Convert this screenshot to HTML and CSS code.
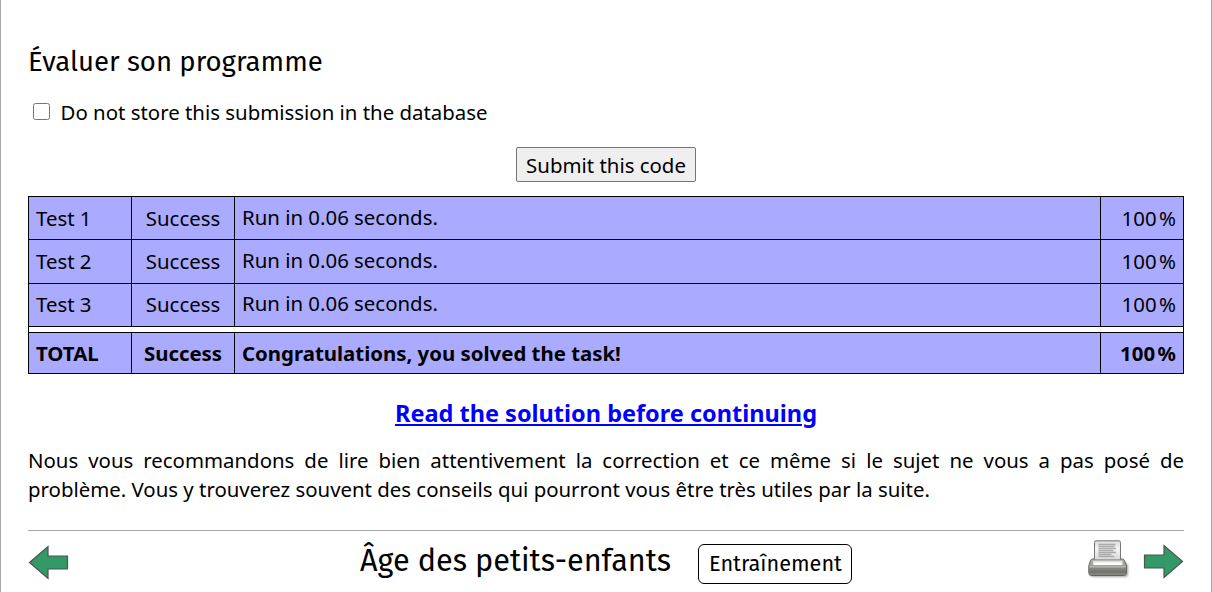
FILE: index.html
```html
<!DOCTYPE html>
<html lang="fr">
<head>
<meta charset="utf-8">
<title>Âge des petits-enfants</title>
<link rel="stylesheet" href="styles.css">
</head>
<body>
<main class="page">
  <h2 class="section-title">Évaluer son programme</h2>
  <form class="submission">
    <label class="store"><input type="checkbox" class="store-box"><span>Do not store this submission in the database</span></label>
    <button type="button" class="submit">Submit this code</button>
  </form>
  <table class="results">
    <colgroup><col class="col-name"><col class="col-status"><col><col class="col-score"></colgroup>
    <tbody>
      <tr class="row"><td>Test 1</td><td class="status">Success</td><td class="message">Run in 0.06 seconds.</td><td class="score">100&nbsp;%</td></tr>
      <tr class="row row-tall"><td>Test 2</td><td class="status">Success</td><td class="message">Run in 0.06 seconds.</td><td class="score">100&nbsp;%</td></tr>
      <tr class="row row-last"><td>Test 3</td><td class="status">Success</td><td class="message">Run in 0.06 seconds.</td><td class="score">100&nbsp;%</td></tr>
      <tr class="gap"><td colspan="4"></td></tr>
      <tr class="total"><td>TOTAL</td><td class="status">Success</td><td>Congratulations, you solved the task!</td><td class="score">100&nbsp;%</td></tr>
    </tbody>
  </table>
  <p class="solution"><a href="#">Read the solution before continuing</a></p>
  <p class="advice">Nous vous recommandons de lire bien attentivement la correction et ce même si le sujet ne vous a pas posé de problème. Vous y trouverez souvent des conseils qui pourront vous être très utiles par la suite.</p>
  <footer class="nav">
    <svg class="prev" width="42" height="36" viewBox="0 0 42 36"><path d="M1.500 18.500 20 2.500V12H39.500V25H20V34.500Z" fill="#339966" stroke="#4c5550" stroke-width="1.2"/></svg>
    <div class="heading"><h1 class="task">Âge des petits-enfants</h1><span class="tag">Entraînement</span></div>
    <div class="tools">
      <svg class="printer" width="42" height="42" viewBox="0 0 42 42">
        <defs>
          <linearGradient id="body" x2="0" y2="1"><stop offset="0" stop-color="#b5b5b0"/><stop offset=".5" stop-color="#a3a29c"/><stop offset="1" stop-color="#74746e"/></linearGradient>
          <linearGradient id="tray" x2="0" y2="1"><stop offset="0" stop-color="#8f8f89"/><stop offset=".6" stop-color="#73736d"/><stop offset="1" stop-color="#8b8b85"/></linearGradient>
          <linearGradient id="paper" x2="0" y2="1"><stop offset="0" stop-color="#dadada"/><stop offset=".4" stop-color="#f5f5f5"/><stop offset="1" stop-color="#d8d8d8"/></linearGradient>
          <filter id="shade"><feGaussianBlur stdDeviation="1"/></filter>
        </defs>
        <rect x="2" y="24" width="38" height="14" rx="3" fill="#777" opacity=".65" filter="url(#shade)"/>
        <path d="M4.500 20H34.500Q36 20 36.500 21.500L38.500 27V33.500Q38.500 36.500 35.500 36.500H3.500Q.8 36.500 .8 33.500V27L2.500 21.500Q3 20 4.500 20Z" fill="url(#body)" stroke="#62625c"/>
        <path d="M1.300 28H38V33.500Q38 36 35.500 36H3.500Q1.300 36 1.300 33.500Z" fill="url(#tray)"/>
        <path d="M1.300 28H38" stroke="#c4c4be" stroke-width=".8"/>
        <path d="M8 1.800H31Q32.500 1.800 32.500 3.500V21H6.500V3.500Q6.500 1.800 8 1.800Z" fill="url(#paper)" stroke="#777"/>
        <path d="M10.500 5.500H27.500M10.500 7.500H26.500M10.500 9.500H28M10.500 11.500H25.500M10.500 13.500H28M10.500 15.500H23.500M10.500 17.500H26.500" stroke="#989898" stroke-width="1.600" opacity=".75"/>
        <path d="M4.500 21.200H35V26.500H4.500Z" fill="#e2e2de" stroke="#97978f" stroke-width=".7"/>
        <path d="M6 23.500H33.500V26H6Z" fill="#fff"/>
      </svg>
      <svg class="next" width="42" height="36" viewBox="0 0 42 36"><path d="M39.500 18.500 21 2.500V12H1.500V25H21V34.500Z" fill="#339966" stroke="#4c5550" stroke-width="1.2"/></svg>
    </div>
  </footer>
</main>
</body>
</html>
```
FILE: styles.css
```css
* { box-sizing: border-box; }
body { margin: 0; background: #fff; overflow: hidden; }
.page {
  height: 592px;
  padding: 40px 27px 0;
  border: solid #a9a9a9;
  border-width: 0 1px;
  color: #000;
  font: 20.4px/29px "Noto Sans", sans-serif;
}
.section-title, .task { margin: 0; font-family: "Fira Sans", "Noto Sans", sans-serif; font-weight: 400; white-space: nowrap; }
.section-title { height: 58px; font-size: 27.54px; line-height: 44px; }
.submission { display: flex; flex-direction: column; align-items: flex-start; height: 98px; margin: 0; }
.store { display: flex; align-items: center; gap: 10.6px; height: 29px; white-space: nowrap; }
.store-box { width: 17px; height: 17px; margin: -3px 0 0 5px; }
.submit {
  align-self: center;
  width: 180px;
  height: 35px;
  margin-top: 20px;
  padding: 1px 0 0;
  border: 1px solid #767676;
  border-radius: 2px;
  background: #efefef;
  color: #000;
  font: 20.4px/29px "Noto Sans", sans-serif;
}
.results { width: 1156px; border-collapse: collapse; table-layout: fixed; }
.col-name, .col-status { width: 103px; }
.col-score { width: 83px; }
.results td { padding: 0 7px; border: 1px solid #000; background: #aaf; line-height: 29px; white-space: nowrap; }
.row { height: 43px; }
.row-tall { height: 44px; }
.results .message { padding-bottom: 2px; }
.results .row-last td { padding-bottom: 2px; }
.results .row-last .message { padding-bottom: 4px; }
.results .status { padding: 0; text-align: center; }
.results .score { text-align: right; word-spacing: -2.8px; }
.gap { height: 6px; }
.results .gap td { padding: 0; background: #fff; line-height: 0; }
.total { height: 41px; font-weight: 700; }
.solution { margin: 22px 0 0; height: 50px; text-align: center; font-size: 23.5px; font-weight: 700; line-height: 35px; }
.solution a { color: #00f; }
.advice { margin: 0; height: 84px; text-align: justify; }
.nav { display: grid; grid-template-columns: 332px 1fr 96px; border-top: 1px solid #a9a9a9; height: 62px; }
.prev { margin-top: 13px; }
.heading { display: flex; }
.task { width: 338px; font-size: 30.6px; line-height: 60px; }
.tag { display: block; width: 154px; height: 40px; margin-top: 13px; padding-left: 10px; border: 1px solid #000; border-radius: 6px; font: 21.7px/39px "Fira Sans", "Noto Sans", sans-serif; white-space: nowrap; }
.tools { display: flex; gap: 13px; }
.printer, .next { flex: none; }
.printer { margin-top: 8px; }
.next { margin-top: 12px; }
```
